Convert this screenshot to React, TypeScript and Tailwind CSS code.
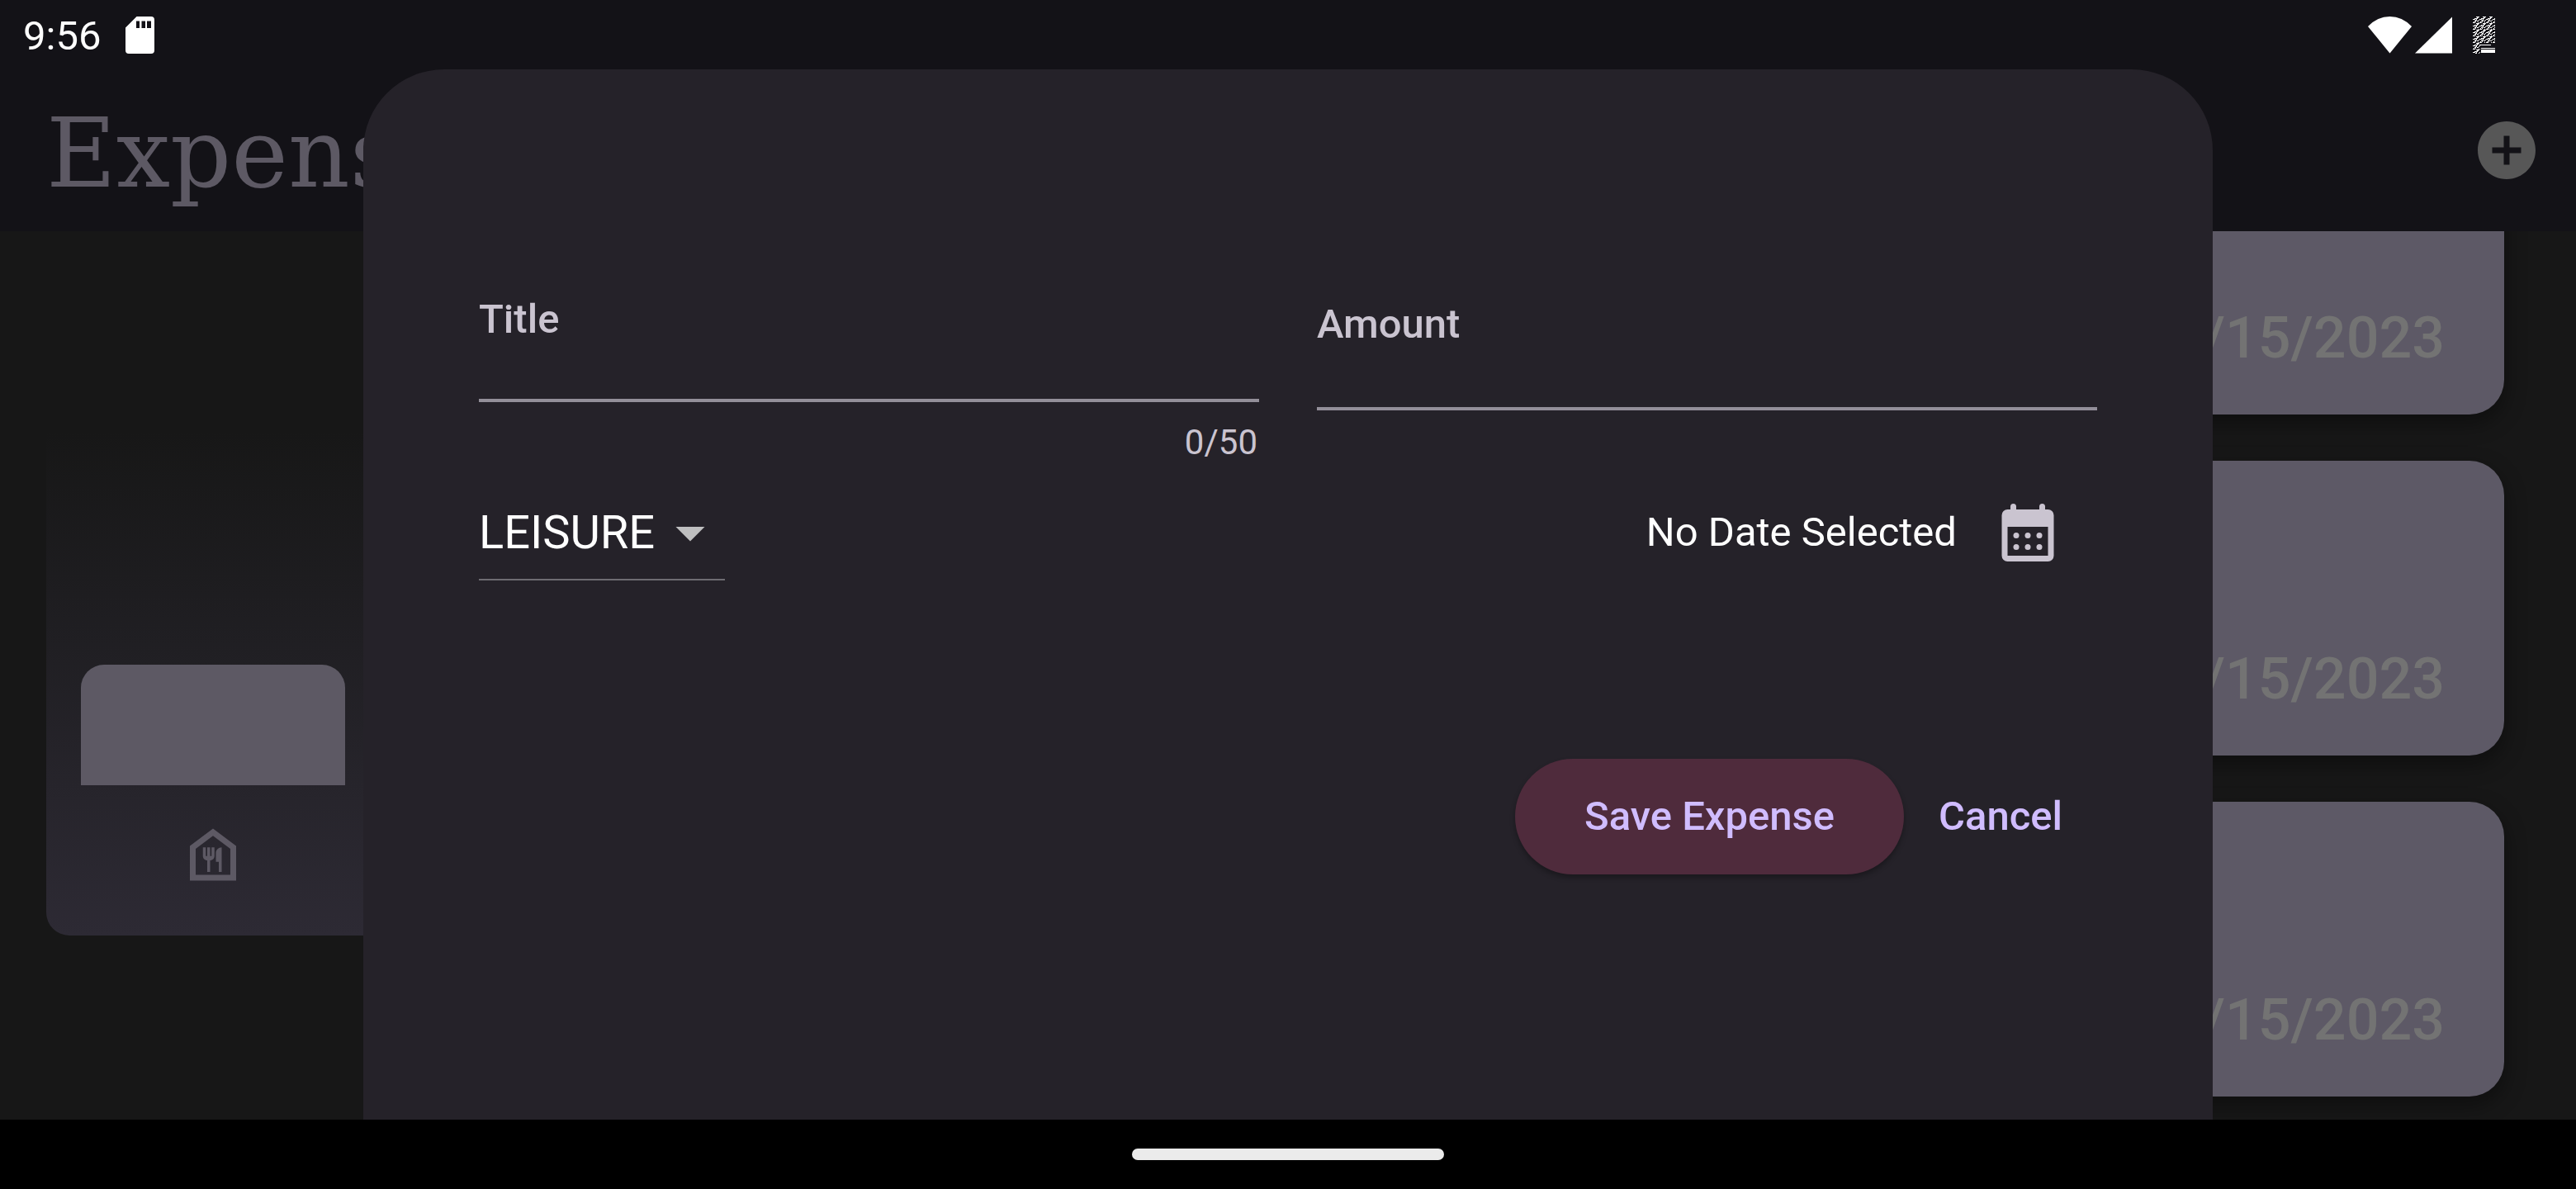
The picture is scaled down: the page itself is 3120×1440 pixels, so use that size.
import { MdAddCircle, MdOutlineFoodBank } from "react-icons/md";

function SdCardIcon() {
  return (
    <svg viewBox="0 0 35 45" className="h-[45px] w-[35px]" aria-hidden="true">
      <path
        fill="#fff"
        fillRule="evenodd"
        d="M13.500 0H31a4 4 0 0 1 4 4v37a4 4 0 0 1-4 4H4a4 4 0 0 1-4-4V13.500zM13 5.500v8.500h4V5.500zm6.500 0v8.500h4.500V5.500zm6.500 0v8.500h5V5.500z"
      />
    </svg>
  );
}

function StatusIcons() {
  return (
    <div className="flex items-center" aria-hidden="true">
      <svg viewBox="0 0 53 45" className="h-[45px] w-[53px]">
        <path fill="#fff" d="M26.500 44.500L0 12Q11.500 0 26.500 0T53 12z" />
      </svg>
      <svg viewBox="0 0 45 45" className="ml-1 h-[45px] w-[45px]">
        <path fill="#fff" d="M45 .5v44H0z" />
      </svg>
      <svg viewBox="0 0 27 45" className="ml-[25px] h-[45px] w-[27px]">
        <defs>
          <pattern id="grain" width="8" height="8" patternUnits="userSpaceOnUse">
            <path
              stroke="#fff"
              strokeWidth="1"
              fill="none"
              d="M4 .5h4M5 1.500h2M2 2.500h4M0 3.500h3M4 3.500h1M3 4.500h2M7 4.500h1M2 5.500h2M5 5.500h2M1 6.500h1M3 6.500h1M0 7.500h3M6 7.500h1"
            />
          </pattern>
        </defs>
        <path fill="url(#grain)" d="M0 0h27v32H0zM0 32h9v13H0z" />
        <path fill="#fff" d="M8 34h14v1H8zM10 38h17v1H10zM10 40h17v4H10z" />
      </svg>
    </div>
  );
}

function CalendarIcon() {
  return (
    <svg viewBox="0 0 24 24" className="size-[84px]" aria-hidden="true">
      <path
        fill="#cac4d0"
        fillRule="evenodd"
        d="M19 4h-1V3a1 1 0 0 0-2 0v1H8V3a1 1 0 0 0-2 0v1H5a2 2 0 0 0-2 2v14a2 2 0 0 0 2 2h14a2 2 0 0 0 2-2V6a2 2 0 0 0-2-2zM5 10h14v10H5z"
      />
      {[8, 12, 16].map((x) => (
        <g key={x} fill="#cac4d0">
          <circle cx={x} cy="13" r="1" />
          <circle cx={x} cy="17" r="1" />
        </g>
      ))}
    </svg>
  );
}

const buckets = [
  { name: "Food", height: 146 },
  { name: "Leisure", height: 0 },
  { name: "Travel", height: 0 },
  { name: "Work", height: 0 },
];

function Chart() {
  return (
    <section
      aria-label="Expenses by category"
      className="mr-14 ml-14 flex h-[630px] rounded-[28px] bg-linear-to-t from-[#2d2a34] to-[#171717] to-97% px-7 py-14"
    >
      {buckets.map((bucket) => (
        <div key={bucket.name} className="flex flex-1 flex-col px-[14px]">
          <div className="flex h-[392px] flex-col justify-end">
            <div className="rounded-t-[28px] bg-[#5d5964]" style={{ height: bucket.height }} />
          </div>
          <div className="mt-[42px] flex justify-center text-[#5d5964]">
            {bucket.name === "Food" && <MdOutlineFoodBank className="size-[84px]" />}
          </div>
        </div>
      ))}
    </section>
  );
}

function ExpenseCard() {
  return (
    <li className="flex h-[357px] shrink-0 items-end justify-end rounded-[42px] bg-[#5d5966] px-[72px] pb-[52px] text-[70px] leading-[82px] font-medium text-[#737373] shadow-[0_10px_24px_2px_rgba(0,0,0,0.35)]">
      10/15/2023
    </li>
  );
}

function ExpenseSheet() {
  return (
    <form
      aria-label="New expense"
      onSubmit={(e) => e.preventDefault()}
      className="mx-auto mt-[84px] w-full max-w-[2240px] flex-1 rounded-t-[98px] bg-[#252229] px-[140px] pt-[274px] text-[49px] leading-[58px] text-white"
    >
      <div className="flex items-start gap-[70px]">
        <div className="flex-1">
          <div className="relative border-b-4 border-[#938f99]">
            <label htmlFor="title" className="absolute top-0 left-0 font-medium text-[#cac4d0]">
              Title
            </label>
            <input id="title" maxLength={50} className="block h-[125px] w-full bg-transparent outline-none" />
          </div>
          <p className="mt-6 pr-0.5 text-right text-[42px] leading-[50px] text-[#cac4d0]">0/50</p>
        </div>
        <div className="relative flex-1 border-b-4 border-[#938f99] pt-[6px]">
          <label htmlFor="amount" className="absolute top-[6px] left-0 font-medium text-[#cac4d0]">
            Amount
          </label>
          <input id="amount" inputMode="decimal" className="block h-[129px] w-full bg-transparent outline-none" />
        </div>
      </div>
      <div className="mt-[42px] flex items-start justify-between">
        <div className="relative border-b-2 border-[#6e6c72] pb-[14px]">
          <select
            aria-label="Category"
            defaultValue="LEISURE"
            className="block h-[84px] w-[298px] appearance-none bg-transparent text-[56px] leading-[66px] outline-none"
          >
            <option>FOOD</option>
            <option>LEISURE</option>
            <option>TRAVEL</option>
            <option>WORK</option>
          </select>
          <svg viewBox="0 0 24 24" className="pointer-events-none absolute top-0 right-0 size-[84px]" aria-hidden="true">
            <path fill="#bfbfc0" d="M7 10l5 5 5-5z" />
          </svg>
        </div>
        <div className="flex items-center gap-[44px] pr-[42px]">
          <span>No Date Selected</span>
          <button type="button" aria-label="Choose a date">
            <CalendarIcon />
          </button>
        </div>
      </div>
      <div className="mt-[216px] flex justify-end font-medium text-[#d0bcff]">
        <button
          type="submit"
          className="h-[140px] rounded-full bg-[#4f2b3c] px-[84px] shadow-[0_4px_6px_rgba(0,0,0,0.3)]"
        >
          Save Expense
        </button>
        <button type="button" className="h-[140px] rounded-full px-[42px]">
          Cancel
        </button>
      </div>
    </form>
  );
}

export default function App() {
  return (
    <div className="relative flex h-screen flex-col overflow-hidden bg-[#171717] font-[Roboto,'Liberation_Sans',sans-serif]">
      <header className="bg-[#131217]">
        <div className="flex h-[84px] items-center justify-between pr-[98px] pl-7 text-[49px] text-white">
          <div className="flex items-center gap-[30px]">
            <time className="pt-1">9:56</time>
            <SdCardIcon />
          </div>
          <StatusIcons />
        </div>
        <div className="flex h-[196px] items-center justify-between pr-[42px] pl-14">
          <h1 className="pt-2 font-['DejaVu_Serif',serif] text-[116px] leading-[140px] text-[#5d5964]">Expenses</h1>
          <button type="button" aria-label="Add expense" className="text-[#575757]">
            <MdAddCircle className="size-[84px]" />
          </button>
        </div>
      </header>
      <main className="grid min-h-0 flex-1 grid-cols-2 items-center">
        <Chart />
        <ul className="flex h-full min-h-0 flex-col justify-end gap-14 overflow-hidden pr-[87px] pb-7 pl-14">
          <ExpenseCard />
          <ExpenseCard />
          <ExpenseCard />
        </ul>
      </main>
      <footer className="flex h-[84px] shrink-0 items-center justify-center bg-black">
        <div className="h-[14px] w-[378px] rounded-full bg-[#ebebeb]" />
      </footer>
      <div className="absolute inset-x-0 top-0 bottom-[84px] flex flex-col">
        <ExpenseSheet />
      </div>
    </div>
  );
}
